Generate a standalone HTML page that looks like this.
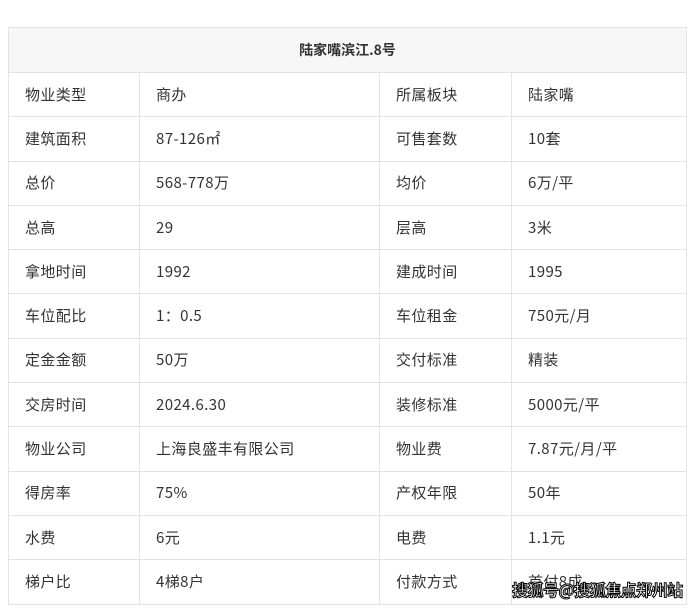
<!DOCTYPE html>
<html><head><meta charset="utf-8"><style>
body{margin:0;background:#fff;width:696px;height:608px;overflow:hidden;font-family:"Noto Sans CJK SC",sans-serif;}
table{position:absolute;left:8px;top:27px;width:678px;border-collapse:collapse;color:#333;font-size:15px;letter-spacing:0.4px;table-layout:fixed;}
td{border:1px solid #e3e3e3;height:44.3px;padding:0 0 0 16px;box-sizing:border-box;line-height:16px;}
th{background:#f7f7f7;border:1px solid #e3e3e3;height:45px;box-sizing:border-box;font-size:14px;letter-spacing:0;font-weight:bold;color:#333;padding:0;line-height:16px;}
.wm{position:absolute;left:512px;top:578px;font-size:16px;font-weight:bold;color:#fff;-webkit-text-stroke:1px #000;letter-spacing:-0.5px;font-family:"Noto Sans CJK SC",sans-serif;line-height:22px;}
</style></head><body>
<table>
<colgroup><col style="width:131px"><col style="width:240px"><col style="width:132px"><col style="width:175px"></colgroup>
<tr><th colspan="4">陆家嘴滨江.8号</th></tr>
<tr><td>物业类型</td><td>商办</td><td>所属板块</td><td>陆家嘴</td></tr>
<tr><td>建筑面积</td><td>87-126㎡</td><td>可售套数</td><td>10套</td></tr>
<tr><td>总价</td><td>568-778万</td><td>均价</td><td>6万/平</td></tr>
<tr><td>总高</td><td>29</td><td>层高</td><td>3米</td></tr>
<tr><td>拿地时间</td><td>1992</td><td>建成时间</td><td>1995</td></tr>
<tr><td>车位配比</td><td>1：0.5</td><td>车位租金</td><td>750元/月</td></tr>
<tr><td>定金金额</td><td>50万</td><td>交付标准</td><td>精装</td></tr>
<tr><td>交房时间</td><td>2024.6.30</td><td>装修标准</td><td>5000元/平</td></tr>
<tr><td>物业公司</td><td>上海良盛丰有限公司</td><td>物业费</td><td>7.87元/月/平</td></tr>
<tr><td>得房率</td><td>75%</td><td>产权年限</td><td>50年</td></tr>
<tr><td>水费</td><td>6元</td><td>电费</td><td>1.1元</td></tr>
<tr><td>梯户比</td><td>4梯8户</td><td>付款方式</td><td>首付8成</td></tr>
</table>
<div class="wm">搜狐号@搜狐焦点郑州站</div>
</body></html>
